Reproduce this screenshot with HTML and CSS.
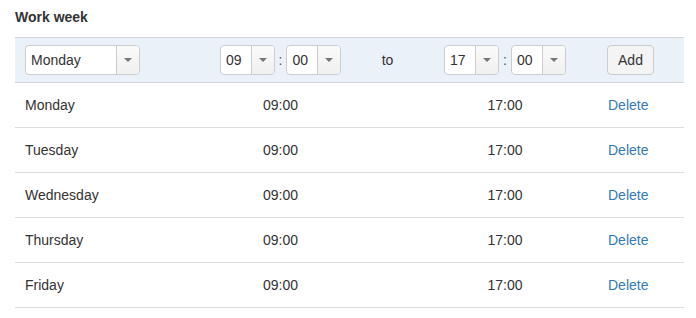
FILE: index.html
```html
<!DOCTYPE html>
<html>
<head>
<meta charset="utf-8">
<link rel="stylesheet" href="styles.css">
</head>
<body>
<div class="page">
  <h3 class="title">Work week</h3>
  <div class="table">
    <div class="row head">
      <div class="cell c1">
        <div class="sel sel-day"><span class="sel-val">Monday</span><span class="sel-btn"><i class="caret"></i></span></div>
      </div>
      <div class="cell c2 time">
        <div class="sel sel-num"><span class="sel-val">09</span><span class="sel-btn"><i class="caret"></i></span></div>
        <span class="colon">:</span>
        <div class="sel sel-num"><span class="sel-val">00</span><span class="sel-btn"><i class="caret"></i></span></div>
      </div>
      <div class="cell c3 to">to</div>
      <div class="cell c4 time">
        <div class="sel sel-num"><span class="sel-val">17</span><span class="sel-btn"><i class="caret"></i></span></div>
        <span class="colon">:</span>
        <div class="sel sel-num"><span class="sel-val">00</span><span class="sel-btn"><i class="caret"></i></span></div>
      </div>
      <div class="cell c5"><button class="btn">Add</button></div>
    </div>
    <div class="row"><div class="cell c1 day">Monday</div><div class="cell c2 ctr">09:00</div><div class="cell c3"></div><div class="cell c4 ctr">17:00</div><div class="cell c5 del"><a class="link">Delete</a></div></div>
    <div class="row"><div class="cell c1 day">Tuesday</div><div class="cell c2 ctr">09:00</div><div class="cell c3"></div><div class="cell c4 ctr">17:00</div><div class="cell c5 del"><a class="link">Delete</a></div></div>
    <div class="row"><div class="cell c1 day">Wednesday</div><div class="cell c2 ctr">09:00</div><div class="cell c3"></div><div class="cell c4 ctr">17:00</div><div class="cell c5 del"><a class="link">Delete</a></div></div>
    <div class="row"><div class="cell c1 day">Thursday</div><div class="cell c2 ctr">09:00</div><div class="cell c3"></div><div class="cell c4 ctr">17:00</div><div class="cell c5 del"><a class="link">Delete</a></div></div>
    <div class="row"><div class="cell c1 day">Friday</div><div class="cell c2 ctr">09:00</div><div class="cell c3"></div><div class="cell c4 ctr">17:00</div><div class="cell c5 del"><a class="link">Delete</a></div></div>
  </div>
</div>
</body>
</html>
```

FILE: styles.css
```css
* { box-sizing: border-box; }
html, body { margin: 0; padding: 0; background: #fff; }
body {
  font-family: "Liberation Sans", Arial, sans-serif;
  font-size: 14px;
  line-height: 20px;
  color: #333;
}
.page { padding: 7px 12px 0 15px; }
.title {
  margin: 0 0 10px 0;
  font-size: 14px;
  font-weight: bold;
  line-height: 20px;
}
.table { width: 669px; }
.row {
  display: grid;
  grid-template-columns: 205px 121px 103px 122px 1fr;
  height: 45px;
  border-bottom: 1px solid #dcdcdc;
  align-items: center;
}
.row.head {
  height: 46px;
  background: #eaf1f9;
  border-top: 1px solid #d2d6db;
  border-bottom: 1px solid #d2d6db;
}
.cell { display: flex; align-items: center; }
.c1 { padding-left: 10px; }
.ctr { justify-content: center; }
.time { justify-content: space-between; }
.to { justify-content: center; padding-right: 10px; }
.c5 { padding-left: 41px; }
.del { padding-left: 42px; }
.link { color: #337ab7; text-decoration: none; }
.sel {
  display: flex;
  height: 30px;
  background: #fff;
  border: 1px solid #ccc;
  border-radius: 4px;
  overflow: hidden;
}
.sel-day { width: 115px; }
.sel-num { width: 55px; }
.sel-val { flex: 1; padding-left: 5px; line-height: 28px; }
.sel-btn {
  width: 23px;
  border-left: 1px solid #ccc;
  background: linear-gradient(#fafafa, #f0f0f0);
  display: flex;
  align-items: center;
  justify-content: center;
}
.caret {
  width: 0; height: 0;
  border-left: 4px solid transparent;
  border-right: 4px solid transparent;
  border-top: 4px solid #777;
}
.colon { color: #555; padding: 0 4px; }
.btn {
  font-family: inherit;
  font-size: 14px;
  color: #333;
  height: 30px;
  width: 47px;
  padding: 0;
  background: #f4f4f4;
  border: 1px solid #ccc;
  border-radius: 4px;
}
```
